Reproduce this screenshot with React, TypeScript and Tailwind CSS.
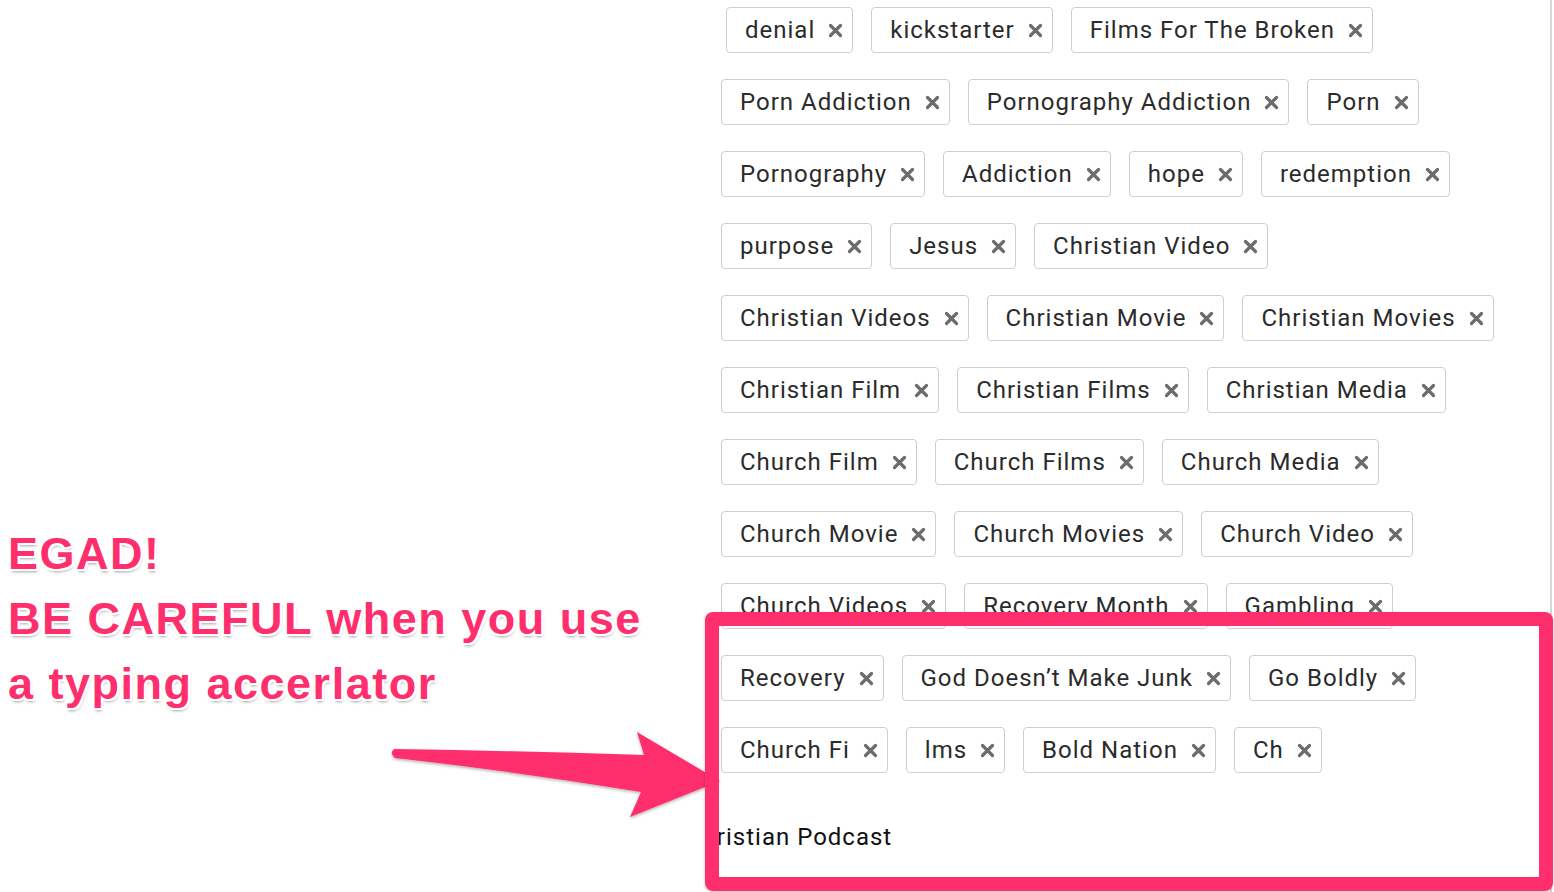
import React from "react";

const rows: string[][] = [
  ["denial", "kickstarter", "Films For The Broken"],
  ["Porn Addiction", "Pornography Addiction", "Porn"],
  ["Pornography", "Addiction", "hope", "redemption"],
  ["purpose", "Jesus", "Christian Video"],
  ["Christian Videos", "Christian Movie", "Christian Movies"],
  ["Christian Film", "Christian Films", "Christian Media"],
  ["Church Film", "Church Films", "Church Media"],
  ["Church Movie", "Church Movies", "Church Video"],
  ["Church Videos", "Recovery Month", "Gambling"],
  ["Recovery", "God Doesn\u2019t Make Junk", "Go Boldly"],
  ["Church Fi", "lms", "Bold Nation", "Ch"],
];

const RemoveIcon = () => (
  <svg width="15" height="15" viewBox="0 0 15 15" className="shrink-0">
    <path d="M2.5 2.5 L12.5 12.5 M12.5 2.5 L2.5 12.5" stroke="#6c6c6c" strokeWidth="3.2" strokeLinecap="round" />
  </svg>
);

const Tag = ({ label }: { label: string }) => (
  <div className="flex h-[46px] items-center rounded-[4px] border border-[#cfcfcf] bg-white pl-[18px] pr-[9px]">
    <span className="whitespace-nowrap text-[24px] leading-none tracking-[1px] text-[#2b2b2b]">{label}</span>
    <span className="ml-[13px] flex items-center">
      <RemoveIcon />
    </span>
  </div>
);

const outline =
  "[text-shadow:2px_0_0_#fff,-2px_0_0_#fff,0_2px_0_#fff,0_-2px_0_#fff,2px_2px_0_#fff,-2px_-2px_0_#fff,2px_-2px_0_#fff,-2px_2px_0_#fff,1px_3px_3px_rgba(0,0,0,0.35)]";

export default function App() {
  return (
    <div className="relative h-[892px] w-[1554px] overflow-hidden bg-white font-['Roboto',sans-serif]">
      <div className="flex h-full">
        <div className="w-[721px] shrink-0" />
        <div className="w-[831px] shrink-0 border-r-2 border-[#d8d8d8] pt-[7px]">
          <div className="flex flex-col gap-[26px]">
            {rows.map((row, i) => (
              <div key={i} className={`flex gap-[18px] ${i === 0 ? "pl-[5px]" : ""}`}>
                {row.map((t) => (
                  <Tag key={t} label={t} />
                ))}
              </div>
            ))}
          </div>
          {/* input text scrolled left, "Ch" hidden */}
          <div className="-ml-[9px] mt-[49px] w-[400px] overflow-hidden">
            <div className="-ml-[26px] whitespace-nowrap text-[24px] leading-[30px] tracking-[1px] text-[#111]">
              Christian Podcast
            </div>
          </div>
        </div>
      </div>

      {/* annotation */}
      <div
        className={`absolute left-[8px] top-[521px] font-['Liberation_Sans',Arial,sans-serif] text-[45px] font-bold leading-[65px] tracking-[1.5px] text-[#ff2e6d] ${outline}`}
      >
        <div>EGAD!</div>
        <div className="whitespace-nowrap">BE CAREFUL when you use</div>
        <div className="whitespace-nowrap">a typing accerlator</div>
      </div>

      <svg className="absolute left-0 top-0" width="1554" height="892" viewBox="0 0 1554 892">
        <defs>
          <filter id="sh" x="-10%" y="-20%" width="120%" height="140%">
            <feDropShadow dx="0" dy="1.5" stdDeviation="1.5" floodColor="#000" floodOpacity="0.3" />
          </filter>
        </defs>
        <path
          d="M394 749 Q520 751 644 755 L637 732 L720 781 L630 817 L641 792 Q520 772 395 758 Q389 753.5 394 749 Z"
          fill="#ff2e6d"
          filter="url(#sh)"
        />
      </svg>

      <div className="absolute left-[705px] top-[612px] h-[279px] w-[848px] rounded-[8px] border-[14px] border-[#ff2e6d] shadow-[0_1px_3px_rgba(0,0,0,0.25)]" />
    </div>
  );
}
